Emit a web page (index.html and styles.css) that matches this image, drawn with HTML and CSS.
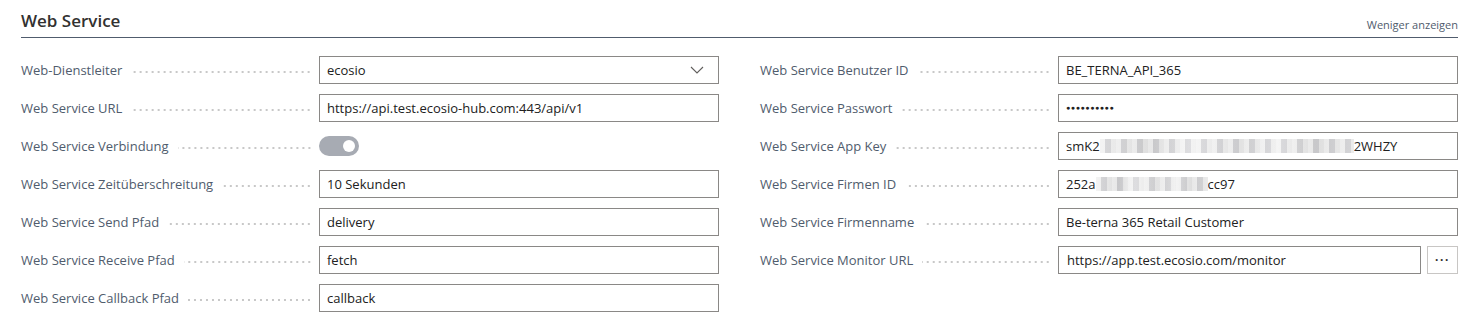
FILE: index.html
```html
<!DOCTYPE html>
<html lang="de">
<head>
    <meta charset="UTF-8">
    <title>Web Service</title>
    <link rel="stylesheet" href="styles.css">
</head>
<body>

    <section class="group">
        <div class="group-header">
            <h2>Web Service</h2>
            <a class="less" href="#">Weniger anzeigen</a>
        </div>

        <div class="columns">
            <div class="column">
                <div class="field">
                    <span class="label">Web-Dienstleiter</span><span class="dots"></span>
                    <div class="box select">
                        <span>ecosio</span>
                        <svg width="14" height="8" viewBox="0 0 14 8"><path d="M1 1l6 6 6-6" fill="none" stroke="#605e5c" stroke-width="1.1"/></svg>
                    </div>
                </div>
                <div class="field">
                    <span class="label">Web Service URL</span><span class="dots"></span>
                    <div class="box">https://api.test.ecosio-hub.com:443/api/v1</div>
                </div>
                <div class="field">
                    <span class="label">Web Service Verbindung</span><span class="dots"></span>
                    <div class="toggle"><span class="knob"></span></div>
                </div>
                <div class="field">
                    <span class="label">Web Service Zeitüberschreitung</span><span class="dots"></span>
                    <div class="box">10 Sekunden</div>
                </div>
                <div class="field">
                    <span class="label">Web Service Send Pfad</span><span class="dots"></span>
                    <div class="box">delivery</div>
                </div>
                <div class="field">
                    <span class="label">Web Service Receive Pfad</span><span class="dots"></span>
                    <div class="box">fetch</div>
                </div>
                <div class="field">
                    <span class="label">Web Service Callback Pfad</span><span class="dots"></span>
                    <div class="box">callback</div>
                </div>
            </div>

            <div class="column">
                <div class="field">
                    <span class="label">Web Service Benutzer ID</span><span class="dots"></span>
                    <div class="box">BE_TERNA_API_365</div>
                </div>
                <div class="field">
                    <span class="label">Web Service Passwort</span><span class="dots"></span>
                    <div class="box password">●●●●●●●●●●</div>
                </div>
                <div class="field">
                    <span class="label">Web Service App Key</span><span class="dots"></span>
                    <div class="box">smK2<span class="blur wide"></span>2WHZY</div>
                </div>
                <div class="field">
                    <span class="label">Web Service Firmen ID</span><span class="dots"></span>
                    <div class="box">252a<span class="blur"></span>cc97</div>
                </div>
                <div class="field">
                    <span class="label">Web Service Firmenname</span><span class="dots"></span>
                    <div class="box">Be-terna 365 Retail Customer</div>
                </div>
                <div class="field">
                    <span class="label">Web Service Monitor URL</span><span class="dots"></span>
                    <div class="box-row">
                        <div class="box url">https://app.test.ecosio.com/monitor</div>
                        <button class="more">···</button>
                    </div>
                </div>
            </div>
        </div>
    </section>

</body>
</html>
```

FILE: styles.css
```css
/* Page */
body {
    margin: 0;
    background: #fff;
    font-family: "Open Sans", "Segoe UI", sans-serif;
    color: #212121;
}

/* Group */
.group {
    padding: 9px 12px 0 21px;
}

.group-header {
    display: flex;
    justify-content: space-between;
    align-items: flex-end;
    border-bottom: 1px solid #505c6d;
    padding-bottom: 4px;
}

.group-header h2 {
    margin: 0;
    font-size: 17px;
    font-weight: 600;
    color: #323130;
    line-height: 24px;
}

.less {
    font-size: 11px;
    color: #505c6d;
    text-decoration: none;
    margin-bottom: 1px;
}

/* Columns */
.columns {
    display: grid;
    grid-template-columns: 698px 698px;
    column-gap: 41px;
    padding-top: 18px;
}

.column {
    display: flex;
    flex-direction: column;
    gap: 10px;
}

.field {
    display: flex;
    align-items: center;
    height: 28px;
}

.label {
    font-size: 13px;
    color: #505c6d;
    white-space: nowrap;
}

.dots {
    flex: 1;
    height: 2px;
    margin: 3px 7px 0 9px;
    background-image: radial-gradient(circle, #c8c8c8 0.8px, transparent 1px);
    background-size: 6px 2px;
    background-position: right center;
}

/* Inputs */
.box {
    width: 400px;
    height: 28px;
    box-sizing: border-box;
    border: 1px solid #8a8886;
    padding: 0 7px;
    font-size: 13px;
    line-height: 26px;
    color: #212121;
    white-space: nowrap;
    overflow: hidden;
    display: flex;
    align-items: center;
}

.select {
    justify-content: space-between;
    padding-right: 14px;
}

.password {
    font-size: 7px;
    letter-spacing: 0.6px;
}

.blur {
    display: inline-block;
    width: 112px;
    height: 14px;
    background:
        repeating-linear-gradient(90deg, rgba(255,255,255,0.5) 0 5px, rgba(160,160,170,0.25) 5px 11px, rgba(255,255,255,0.3) 11px 16px),
        linear-gradient(90deg, #e4e4e4, #c8c8c8 20%, #ececec 35%, #cfcfcf 55%, #e8e8e8 70%, #c9c9c9 85%, #dedede);
    opacity: 0.85;
}

.blur.wide {
    width: 254px;
}

.box-row {
    display: flex;
    gap: 6px;
    width: 400px;
}

.box.url {
    width: 363px;
    padding-left: 8px;
}

.more {
    width: 31px;
    height: 28px;
    border: 1px solid #c8c6c4;
    background: #fff;
    font-size: 12px;
    letter-spacing: 1px;
    color: #323130;
    padding: 0;
    font-weight: bold;
}

/* Toggle */
.toggle {
    width: 40px;
    height: 20px;
    border-radius: 10px;
    background: #a7abb3;
    position: relative;
    margin-right: 360px;
}

.knob {
    position: absolute;
    right: 4px;
    top: 4px;
    width: 12px;
    height: 12px;
    border-radius: 50%;
    background: #fff;
}
```
